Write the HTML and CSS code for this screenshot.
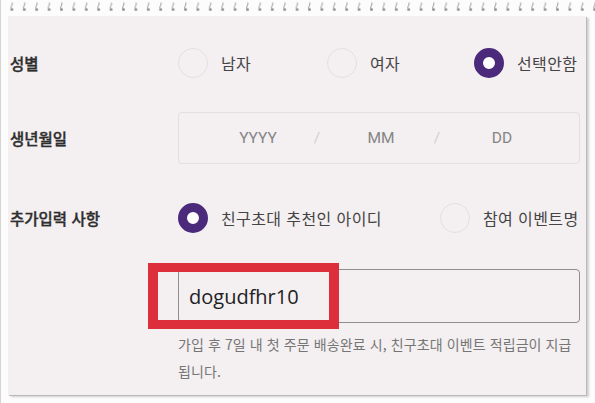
FILE: index.html
```html
<!DOCTYPE html>
<html lang="ko">
<head>
<meta charset="utf-8">
<title>추가정보</title>
<link rel="stylesheet" href="styles.css">
</head>
<body>
<div class="frame">
  <svg class="spiral" width="595" height="16" aria-hidden="true">
    <defs>
      <pattern id="hook" x="9.5" y="0" width="12.4" height="16" patternUnits="userSpaceOnUse">
        <path d="M2.6 2.5 C3.8 4.2 1.2 6 1.6 8.6" fill="none" stroke="#8a8a8a" stroke-width="0.9"/>
        <circle cx="2.4" cy="9.6" r="1.5" fill="#9a9a9a"/>
      </pattern>
    </defs>
    <rect x="0" y="0" width="595" height="16" fill="url(#hook)"/>
  </svg>
  <div class="panel">
    <div class="row row-gender">
      <div class="label">성별</div>
      <div class="options opts-3">
        <label class="opt"><span class="radio"></span><span class="opt-text">남자</span></label>
        <label class="opt"><span class="radio"></span><span class="opt-text">여자</span></label>
        <label class="opt"><span class="radio on"></span><span class="opt-text">선택안함</span></label>
      </div>
    </div>
    <div class="row row-birth">
      <div class="label">생년월일</div>
      <div class="datebox">
        <span class="dpart">YYYY</span>
        <span class="dsep">/</span>
        <span class="dpart">MM</span>
        <span class="dsep">/</span>
        <span class="dpart">DD</span>
      </div>
    </div>
    <div class="row row-extra">
      <div class="label">추가입력 사항</div>
      <div class="options opts-2">
        <label class="opt"><span class="radio on"></span><span class="opt-text">친구초대 추천인 아이디</span></label>
        <label class="opt"><span class="radio"></span><span class="opt-text">참여 이벤트명</span></label>
      </div>
    </div>
    <div class="row row-input">
      <div class="label"></div>
      <div class="inputwrap">
        <div class="textinput">dogudfhr10</div>
        <div class="highlight"></div>
      </div>
    </div>
    <div class="row row-help">
      <div class="label"></div>
      <p class="help">가입 후 7일 내 첫 주문 배송완료 시, 친구초대 이벤트 적립금이 지급 됩니다.</p>
    </div>
  </div>
</div>
</body>
</html>
```

FILE: styles.css
```css
* { box-sizing: border-box; }
html, body { margin: 0; padding: 0; }
body {
  background: #fcfcfc;
  font-family: "Noto Sans CJK KR", "Noto Sans", sans-serif;
  color: #333;
}
.frame {
  width: 595px;
  height: 403px;
  display: flex;
  flex-direction: column;
  padding: 0 9px 8px 7px;
  border-left: 1px solid #d4d4d4;
  position: relative;
  overflow: hidden;
}
.spiral {
  display: block;
  flex: 0 0 16px;
  margin-left: -8px;
}
.panel {
  flex: 1;
  background: #f4eff1;
  padding: 32px 7px 0 1px;
  box-shadow: 1px 1px 0 #b9b9b9, 3px 2px 2px rgba(0,0,0,0.18);
}
.row {
  display: grid;
  grid-template-columns: 169px 402px;
  align-items: center;
}
.label {
  font-size: 15.5px;
  font-weight: 500;
  color: #2e2e2e;
  padding-left: 1px;
  -webkit-text-stroke: 0.35px #2e2e2e;
}
.options { display: grid; align-items: center; }
.opts-3 { grid-template-columns: 149px 147px auto; }
.opts-2 { grid-template-columns: 262px auto; }
.opt {
  display: flex;
  align-items: center;
  gap: 13px;
  font-size: 16px;
  letter-spacing: 0.4px;
  color: #444;
}
.radio {
  width: 30px;
  height: 30px;
  border-radius: 50%;
  border: 1px solid #e5dfe2;
  background: #f4eff1;
  flex: 0 0 30px;
}
.radio.on {
  border: 9px solid #4b2a7c;
  background: #ffffff;
}
.opt-text { line-height: 30px; }

.row-birth { margin-top: 34px; }
.datebox {
  height: 52px;
  border: 1px solid #e4dee1;
  border-radius: 4px;
  display: grid;
  grid-template-columns: 94px 24px 104px 8px 122px;
  padding-left: 32px;
  align-items: center;
  font-family: Roboto, "Noto Sans", sans-serif;
  font-size: 15.5px;
  color: #858585;
}
.dpart { text-align: center; }
.dsep { color: #d4ced1; text-align: center; }

.row-extra { margin-top: 39px; }
.row-input { margin-top: 36px; }
.inputwrap { position: relative; }
.textinput {
  height: 54px;
  border: 1px solid #8e8e8e;
  border-radius: 4px;
  padding-left: 10px;
  display: flex;
  align-items: center;
  font-family: "Open Sans", "Noto Sans", sans-serif;
  font-size: 20px;
  color: #222;
}
.highlight {
  position: absolute;
  left: -30px;
  top: -6px;
  width: 191px;
  height: 66px;
  border: 9px solid #dc2f3b;
  border-left-width: 10px;
  border-right-width: 10px;
}
.row-help { margin-top: 8px; }
.help {
  margin: 0;
  font-size: 14px;
  letter-spacing: 0.1px;
  line-height: 27px;
  color: #767676;
}
```
